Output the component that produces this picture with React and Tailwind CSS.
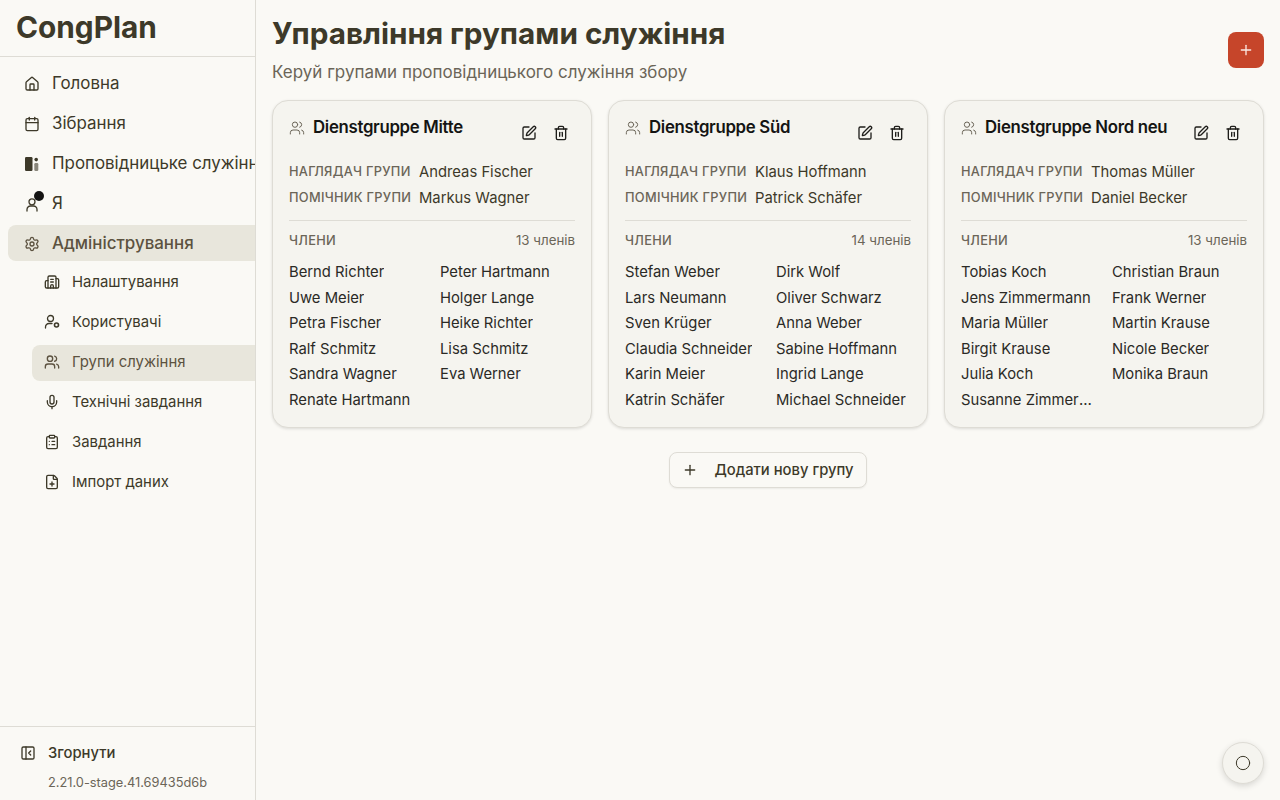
import React from 'react';
import { House, Calendar, Settings, Building2, Users, Mic, ClipboardList, FilePlus, PanelLeftClose, Plus, SquarePen, Trash2, Circle } from 'lucide-react';

const groups = [
  {
    name: 'Dienstgruppe Mitte',
    overseer: 'Andreas Fischer',
    assistant: 'Markus Wagner',
    count: '13 членів',
    members: ['Bernd Richter', 'Peter Hartmann', 'Uwe Meier', 'Holger Lange', 'Petra Fischer', 'Heike Richter', 'Ralf Schmitz', 'Lisa Schmitz', 'Sandra Wagner', 'Eva Werner', 'Renate Hartmann'],
  },
  {
    name: 'Dienstgruppe Süd',
    overseer: 'Klaus Hoffmann',
    assistant: 'Patrick Schäfer',
    count: '14 членів',
    members: ['Stefan Weber', 'Dirk Wolf', 'Lars Neumann', 'Oliver Schwarz', 'Sven Krüger', 'Anna Weber', 'Claudia Schneider', 'Sabine Hoffmann', 'Karin Meier', 'Ingrid Lange', 'Katrin Schäfer', 'Michael Schneider'],
  },
  {
    name: 'Dienstgruppe Nord neu',
    overseer: 'Thomas Müller',
    assistant: 'Daniel Becker',
    count: '13 членів',
    members: ['Tobias Koch', 'Christian Braun', 'Jens Zimmermann', 'Frank Werner', 'Maria Müller', 'Martin Krause', 'Birgit Krause', 'Nicole Becker', 'Julia Koch', 'Monika Braun', 'Susanne Zimmermann'],
  },
];

const ServiceIcon = () => (
  <svg width="16" height="16" viewBox="0 0 16 16" fill="currentColor" className="shrink-0">
    <rect x="1" y="1" width="7.5" height="14" rx="1.2" />
    <circle cx="12.2" cy="3.6" r="1.8" />
    <rect x="10.3" y="7" width="4" height="8" rx="1.2" opacity="0.6" />
  </svg>
);

const PersonIcon = () => (
  <svg width="16" height="16" viewBox="0 0 16 16" fill="none" stroke="currentColor" strokeWidth="1.3" strokeLinecap="round" className="shrink-0">
    <circle cx="8" cy="5.8" r="3" />
    <path d="M3 15v-1.5A3.5 3.5 0 0 1 6.5 10h3a3.5 3.5 0 0 1 3.5 3.5V15" />
  </svg>
);

const UserRingIcon = () => (
  <svg width="16" height="16" viewBox="0 0 16 16" fill="none" stroke="currentColor" strokeWidth="1.3" strokeLinecap="round" className="shrink-0">
    <circle cx="6.5" cy="4.5" r="3" />
    <path d="M1.5 14v-1A3.5 3.5 0 0 1 5 9.5h3" />
    <circle cx="12.5" cy="11" r="2" strokeWidth="1.6" />
  </svg>
);

const MainItem = ({ icon, label, active }) => (
  <div className={`ml-2 flex h-9 shrink-0 items-center gap-3 whitespace-nowrap rounded-l-lg pl-4 pt-[2px] text-[16.9px] ${active ? 'bg-[#e8e6dc] font-medium text-[#5c5240]' : 'text-[#3d3929]'}`}>
    {icon}
    <span>{label}</span>
  </div>
);

const SubItem = ({ icon, label, active }) => (
  <div className={`ml-8 flex h-9 shrink-0 items-center gap-3 whitespace-nowrap rounded-l-lg pl-[12px] pb-[2px] text-[14.9px] ${active ? 'bg-[#e8e6dc] text-[#5c5240]' : 'text-[#3d3929]'}`}>
    {icon}
    <span>{label}</span>
  </div>
);

const GroupCard = ({ group }) => (
  <div className="h-[328px] rounded-2xl border border-[#dedcd5] bg-[#f5f4ef] px-4 pt-[15px] shadow-[0_1px_3px_rgba(0,0,0,0.12)]">
    <div className="flex items-start justify-between">
      <div className="flex h-5 items-center gap-2 pt-[3px]">
        <Users size={16} strokeWidth={1.5} className="text-[#6b6558]" />
        <span className="text-[16.8px] font-semibold tracking-[-0.3px] text-[#141413]">{group.name}</span>
      </div>
      <div className="mt-[9px] flex gap-4 pr-[6px] text-[#1f1e1b]">
        <SquarePen size={16} />
        <Trash2 size={16} />
      </div>
    </div>
    <div className="mt-[17.6px] flex h-[26px] items-center text-[14.8px] text-[#3d3929]">
      <span className="w-[130px] text-[12.8px] font-medium tracking-[0.3px] text-[#6b6558]">НАГЛЯДАЧ ГРУПИ</span>
      <span>{group.overseer}</span>
    </div>
    <div className="flex h-[26px] items-center text-[14.8px] text-[#3d3929]">
      <span className="w-[130px] text-[12.8px] font-medium tracking-[0.3px] text-[#6b6558]">ПОМІЧНИК ГРУПИ</span>
      <span>{group.assistant}</span>
    </div>
    <div className="mt-[9.4px] border-t border-[#dedcd5] pt-[10px]">
      <div className="flex items-center justify-between">
        <span className="text-[12.8px] font-medium tracking-[0.3px] text-[#6b6558]">ЧЛЕНИ</span>
        <span className="text-[13.3px] text-[#6b6558]">{group.count}</span>
      </div>
      <div className="mt-[8.4px] grid grid-cols-2 gap-x-4">
        {group.members.map((m) => (
          <div key={m} className="flex h-[25.6px] items-center text-[14.8px] text-[#2b2a26]">
            <span className="truncate">{m}</span>
          </div>
        ))}
      </div>
    </div>
  </div>
);

export default function App() {
  return (
    <div className="flex h-[800px] w-[1280px] overflow-hidden bg-[#faf9f5] font-['Inter',sans-serif]">
      <aside className="flex h-full w-[256px] shrink-0 flex-col overflow-hidden border-r border-[#dedcd5]">
        <div className="flex h-[57px] shrink-0 items-center border-b border-[#dedcd5] pb-[2px] pl-4 text-[29.8px] font-bold text-[#3d3929]">CongPlan</div>
        <nav className="flex flex-1 flex-col gap-1 pt-2">
          <MainItem icon={<House size={16} />} label="Головна" />
          <MainItem icon={<Calendar size={16} />} label="Зібрання" />
          <MainItem icon={<ServiceIcon />} label="Проповідницьке служіння" />
          <div className="relative">
            <MainItem icon={<PersonIcon />} label="Я" />
            <span className="absolute left-[34px] top-[6px] h-[10px] w-[10px] rounded-full bg-[#141413]" />
          </div>
          <MainItem icon={<Settings size={16} />} label="Адміністрування" active />
          <SubItem icon={<Building2 size={16} />} label="Налаштування" />
          <SubItem icon={<UserRingIcon />} label="Користувачі" />
          <SubItem icon={<Users size={16} />} label="Групи служіння" active />
          <SubItem icon={<Mic size={16} />} label="Технічні завдання" />
          <SubItem icon={<ClipboardList size={16} />} label="Завдання" />
          <SubItem icon={<FilePlus size={16} />} label="Імпорт даних" />
        </nav>
        <div className="h-[74px] shrink-0 border-t border-[#dedcd5] pl-5 pt-[15px]">
          <div className="flex items-center gap-[12px] text-[14.8px] font-medium text-[#3d3929]">
            <PanelLeftClose size={16} />
            <span>Згорнути</span>
          </div>
          <div className="ml-7 mt-[11px] text-[12.8px] leading-4 text-[#6b6558]">2.21.0-stage.41.69435d6b</div>
        </div>
      </aside>

      <main className="relative flex-1 px-4 pt-[15px]">
        <div className="flex h-[85px] items-start justify-between">
          <div>
            <h1 className="text-[29.7px] leading-9 font-bold text-[#3d3929]">Управління групами служіння</h1>
            <p className="mt-[9px] text-[17px] text-[#6b6558]">Керуй групами проповідницького служіння збору</p>
          </div>
          <button className="mt-[17px] flex h-9 w-9 items-center justify-center rounded-lg bg-[#c6452a] text-[#fbe9e3]">
            <Plus size={16} />
          </button>
        </div>
        <div className="grid grid-cols-3 gap-4">
          {groups.map((g) => (
            <GroupCard key={g.name} group={g} />
          ))}
        </div>
        <div className="mt-6 flex justify-center">
          <button className="flex h-9 items-center gap-4 rounded-lg border border-[#dedcd5] bg-[#faf9f5] px-3 text-[14.8px] font-medium text-[#3d3929] shadow-[0_1px_2px_rgba(0,0,0,0.06)]">
            <Plus size={16} />
            <span>Додати нову групу</span>
          </button>
        </div>
        <button className="absolute bottom-[16px] right-4 flex h-[42px] w-[42px] items-center justify-center rounded-full border border-[#dedcd5] bg-[#f5f4ef] text-[#3d3929] shadow-[0_2px_6px_rgba(0,0,0,0.14)]">
          <Circle size={16} strokeWidth={1.5} />
        </button>
      </main>
    </div>
  );
}
